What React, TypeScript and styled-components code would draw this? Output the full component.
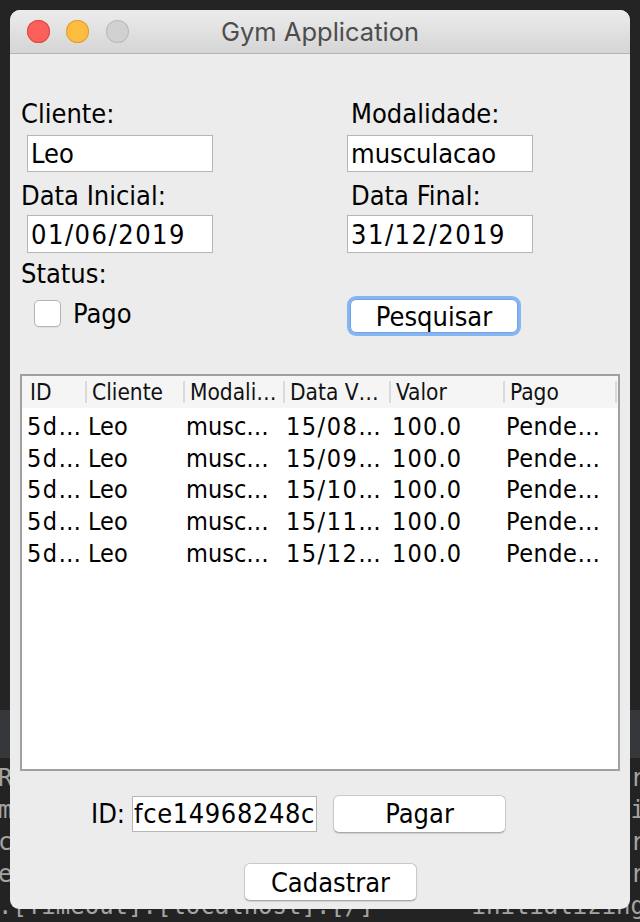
import React from "react";
import styled, { createGlobalStyle } from "styled-components";

const Global = createGlobalStyle`
  html, body { margin: 0; padding: 0; background: #232323; }
  body { width: 640px; height: 922px; overflow: hidden; }
`;

const UI_FONT = `"DejaVu Sans Condensed", "DejaVu Sans", sans-serif`;

const Desktop = styled.div`
  position: relative;
  width: 640px;
  height: 922px;
  overflow: hidden;
  background: #232323;
`;

const Terminal = styled.div`
  display: flex;
  flex-direction: column;
  height: 100%;
  font-family: "DejaVu Sans Mono", "Liberation Mono", monospace;
  font-size: 24px;
  color: #a3a3a3;
`;

const TermTop = styled.div`
  height: 715px;
  background: #242424;
`;

const TermBand = styled.div`
  height: 48px;
  background: #35373a;
`;

const TermLines = styled.div`
  display: flex;
  flex-direction: column;
  padding-top: 4px;
`;

const TermLine = styled.div`
  display: flex;
  justify-content: space-between;
  height: 32px;
  line-height: 32px;
  white-space: pre;
  margin: 0 -5px 0 -2px;
`;

const Window = styled.div`
  position: absolute;
  left: 10px;
  top: 10px;
  width: 620px;
  display: flex;
  flex-direction: column;
  background: #ececec;
  border-radius: 10px 10px 9px 9px;
  overflow: hidden;
  font-family: ${UI_FONT};
  font-stretch: semi-condensed;
  color: #000;
`;

const TitleBar = styled.div`
  height: 43px;
  border-bottom: 1px solid #b3b3b3;
  background: linear-gradient(#ececec, #d5d5d5);
  display: grid;
  grid-template-columns: 1fr auto 1fr;
  align-items: center;
`;

const Lights = styled.div`
  display: flex;
  gap: 16.5px;
  padding-left: 16.5px;
`;

const Light = styled.span<{ $fill: string; $edge: string }>`
  width: 23px;
  height: 23px;
  border-radius: 50%;
  background: ${(p) => p.$fill};
  box-shadow: inset 0 0 0 1px ${(p) => p.$edge};
`;

const Title = styled.div`
  font-family: Inter, "Open Sans", sans-serif;
  font-size: 25.5px;
  color: #4d4d4d;
  white-space: nowrap;
`;

const Content = styled.div`
  display: flex;
  flex-direction: column;
  padding: 46px 0 8px;
`;

const Form = styled.div`
  display: grid;
  grid-template-columns: 326px 1fr;
  padding-left: 11px;
  align-items: start;
`;

const Column = styled.div`
  display: flex;
  flex-direction: column;
  align-items: flex-start;
`;

const Label = styled.div<{ $mt?: number; $ml?: number }>`
  font-size: 27px;
  line-height: 28px;
  height: 28px;
  white-space: nowrap;
  margin-top: ${(p) => p.$mt ?? 0}px;
  margin-left: ${(p) => p.$ml ?? 0}px;
`;

const Field = styled.div<{
  $mt?: number;
  $ml?: number;
  $h: number;
  $w?: number;
  $pad?: number;
  $ls?: number;
}>`
  box-sizing: border-box;
  width: ${(p) => p.$w ?? 186}px;
  height: ${(p) => p.$h}px;
  margin-top: ${(p) => p.$mt ?? 0}px;
  margin-left: ${(p) => p.$ml ?? 0}px;
  padding: 0 ${(p) => p.$pad ?? 3}px;
  display: flex;
  align-items: center;
  background: #fff;
  border: 1px solid #b6b6b6;
  font-size: 27px;
  letter-spacing: ${(p) => p.$ls ?? 0}px;
  white-space: nowrap;
  overflow: hidden;
`;

const CheckRow = styled.label`
  display: flex;
  align-items: center;
  gap: 12px;
  margin: 12px 0 0 13px;
  height: 27px;
  font-size: 27px;
`;

const CheckBox = styled.span`
  box-sizing: border-box;
  width: 27px;
  height: 27px;
  border-radius: 5px;
  background: #fff;
  border: 1px solid #b4b4b4;
  box-shadow: 0 1px 0 rgba(0, 0, 0, 0.05);
`;

const Button = styled.button<{ $w: number; $h: number; $mt?: number; $ml?: number; $focus?: boolean }>`
  box-sizing: border-box;
  width: ${(p) => p.$w}px;
  height: ${(p) => p.$h}px;
  margin: ${(p) => p.$mt ?? 0}px 0 0 ${(p) => p.$ml ?? 0}px;
  padding: 0;
  background: #fff;
  border: 1px solid #c9c9c9;
  border-bottom-color: #a9a9a9;
  border-radius: 6px;
  font-family: ${UI_FONT};
  font-stretch: semi-condensed;
  font-size: 27px;
  color: #000;
  box-shadow: ${(p) =>
    p.$focus ? "0 0 0 3px #86b6f2" : "0 1px 1px rgba(0, 0, 0, 0.12)"};
  ${(p) => (p.$focus ? "border-color: #6fa3e6;" : "")}
`;

const TableBox = styled.div`
  box-sizing: border-box;
  width: 600px;
  height: 397px;
  margin: 41px 0 0 10px;
  border: 2px solid #a0a0a0;
  background: #fff;
  display: flex;
  flex-direction: column;
`;

const HeaderRow = styled.div`
  display: flex;
  align-items: center;
  height: 32px;
  background: #f5f5f5;
  font-size: 22.5px;
  color: #111;
`;

const HeaderCell = styled.div<{ $w: number; $pad: number }>`
  display: flex;
  align-items: center;
  gap: 5px;
  width: ${(p) => p.$w}px;
  padding-left: ${(p) => p.$pad}px;
  box-sizing: border-box;
  white-space: nowrap;
`;

const Sep = styled.span`
  width: 2px;
  height: 22px;
  background: #dadada;
  flex: none;
`;

const Body = styled.div`
  display: flex;
  flex-direction: column;
  padding-top: 3px;
`;

const Row = styled.div`
  display: flex;
  height: 31.6px;
  align-items: center;
  font-size: 25px;
`;

const Cell = styled.div<{ $w: number; $ls: number; $pad: number }>`
  width: ${(p) => p.$w}px;
  padding-left: ${(p) => p.$pad}px;
  letter-spacing: ${(p) => p.$ls}px;
  box-sizing: border-box;
  white-space: nowrap;
`;

const IdRow = styled.div`
  display: flex;
  align-items: center;
  height: 39px;
  margin-top: 23px;
  padding-left: 81px;
`;

const IdLabel = styled.span`
  font-size: 27px;
  margin-right: 7px;
`;

const CadRow = styled.div`
  display: flex;
  margin-top: 30px;
`;

const widths = [63, 98, 100, 106, 114, 112];
const spacing = [1.5, 0, 0, 1.5, 1.2, 0.5];
const pads = [5, 3, 3, 3, 3, 3];
const headers = ["ID", "Cliente", "Modali…", "Data V…", "Valor", "Pago"];
const rows = ["08", "09", "10", "11", "12"].map((m) => [
  "5d…",
  "Leo",
  "musc…",
  `15/${m}…`,
  "100.0",
  "Pende…",
]);

const termLines: [string, string][] = [
  ["R", "r"],
  ["m", "i"],
  ["c", "r"],
  ["e", "r"],
  [".[Timeout]:[localhost]:[/]", "- initializing"],
];

export default function App() {
  return (
    <Desktop>
      <Global />
      <Terminal>
        <TermTop />
        <TermBand />
        <TermLines>
          {termLines.map(([l, r], i) => (
            <TermLine key={i}>
              <span>{l}</span>
              <span>{r}</span>
            </TermLine>
          ))}
        </TermLines>
      </Terminal>

      <Window>
        <TitleBar>
          <Lights>
            <Light $fill="#fc605b" $edge="#de4a45" />
            <Light $fill="#fdbd40" $edge="#dea236" />
            <Light $fill="#d1d1d1" $edge="#bcbcbc" />
          </Lights>
          <Title>Gym Application</Title>
          <span />
        </TitleBar>

        <Content>
          <Form>
            <Column>
              <Label>Cliente:</Label>
              <Field $mt={7} $ml={6} $h={37}>Leo</Field>
              <Label $mt={10}>Data Inicial:</Label>
              <Field $mt={5} $ml={6} $h={38} $ls={1.5}>01/06/2019</Field>
              <Label $mt={7}>Status:</Label>
              <CheckRow>
                <CheckBox />
                Pago
              </CheckRow>
            </Column>
            <Column>
              <Label $ml={4}>Modalidade:</Label>
              <Field $mt={7} $h={37}>musculacao</Field>
              <Label $mt={10} $ml={4}>Data Final:</Label>
              <Field $mt={5} $h={38} $ls={1.5}>31/12/2019</Field>
              <Button $w={168} $h={34} $mt={46} $ml={3} $focus>
                Pesquisar
              </Button>
            </Column>
          </Form>

          <TableBox>
            <HeaderRow>
              {headers.map((h, i) => (
                <HeaderCell key={h} $w={widths[i]} $pad={i === 0 ? 8 : 0}>
                  {i > 0 && <Sep />}
                  {h}
                </HeaderCell>
              ))}
              <Sep />
            </HeaderRow>
            <Body>
              {rows.map((r, ri) => (
                <Row key={ri}>
                  {r.map((c, ci) => (
                    <Cell key={ci} $w={widths[ci]} $ls={spacing[ci]} $pad={pads[ci]}>
                      {c}
                    </Cell>
                  ))}
                </Row>
              ))}
            </Body>
          </TableBox>

          <IdRow>
            <IdLabel>ID:</IdLabel>
            <Field $h={36} $w={185} $pad={1} $ls={0.6}>fce14968248c</Field>
            <Button $w={173} $h={38} $ml={16}>
              Pagar
            </Button>
          </IdRow>

          <CadRow>
            <Button $w={173} $h={38} $ml={234}>
              Cadastrar
            </Button>
          </CadRow>
        </Content>
      </Window>
    </Desktop>
  );
}
